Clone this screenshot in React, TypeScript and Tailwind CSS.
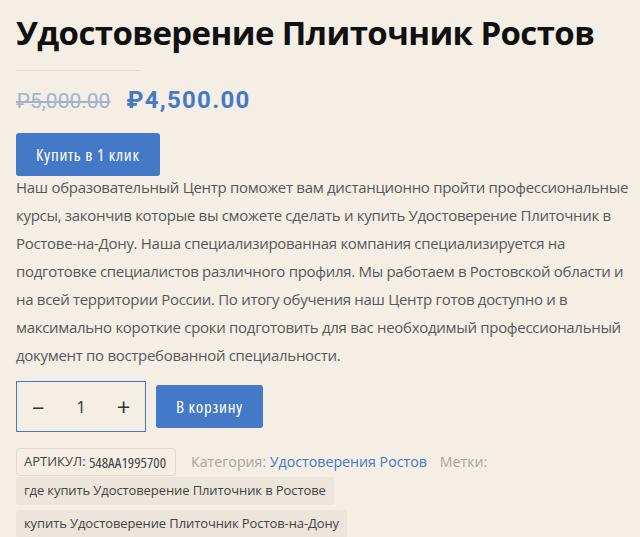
import React, { useState } from "react";

const App = () => {
  const [qty, setQty] = useState(1);

  return (
    <div className="min-h-screen bg-[#f4eee5] pl-4 pt-[11px] font-['Open_Sans',sans-serif] text-[#555]">
      <h1 className="whitespace-nowrap text-[33px] font-bold leading-[44px] tracking-[-0.6px] text-[#111]">
        Удостоверение Плиточник Ростов
      </h1>

      <div className="mt-[15px] h-px w-[124px] bg-[#e2dad0]" />

      <div className="mt-[13px] flex h-[32px] items-baseline gap-[16px] font-['Roboto',sans-serif]">
        <del className="text-[21px] leading-[32px] text-[#a2b4cc]">₽5,000.00</del>
        <span className="text-[24px] font-bold leading-[32px] tracking-[1.3px] text-[#4379c6]">₽4,500.00</span>
      </div>

      <button className="mt-[17px] h-[43px] rounded-[3px] bg-[#4379c6] px-5 text-[17px] tracking-[0.7px] text-white [font-stretch:condensed]">
        Купить в 1 клик
      </button>

      <p className="mt-[-3px] pr-1 text-[15px] leading-[28px] tracking-[-0.3px] text-[#585858]">
        Наш образовательный Центр поможет вам дистанционно пройти профессиональные курсы, закончив которые вы сможете
        сделать и купить Удостоверение Плиточник в Ростове-на-Дону. Наша специализированная компания специализируется на
        подготовке специалистов различного профиля. Мы работаем в Ростовской области и на всей территории России. По итогу
        обучения наш Центр готов доступно и в максимально короткие сроки подготовить для вас необходимый профессиональный
        документ по востребованной специальности.
      </p>

      <div className="mt-[12px] flex items-center gap-[10px]">
        <div className="grid h-[51px] w-[130px] grid-cols-3 items-center border border-[#4379c6] text-center text-[#333]">
          <button onClick={() => setQty(Math.max(1, qty - 1))} className="text-[22px] leading-none">
            −
          </button>
          <span className="text-[17px]">{qty}</span>
          <button onClick={() => setQty(qty + 1)} className="text-[24px] leading-none">
            +
          </button>
        </div>
        <button className="h-[43px] rounded-[3px] bg-[#4379c6] px-5 text-[17px] tracking-[0.7px] text-white [font-stretch:condensed]">
          В корзину
        </button>
      </div>

      <div className="mt-[16px] flex items-center text-[14.2px]">
        <span className="mr-[15px] flex h-[28px] items-center rounded-[4px] border border-[#e2dad0] pl-[7px] pr-[9px] text-[13px] text-[#444]">
          АРТИКУЛ:&nbsp;<span className="text-[15px] [font-stretch:condensed]">548AA1995700</span>
        </span>
        <span className="mr-[13px] text-[#aaa49c]">
          Категория: <a className="text-[#4379c6]">Удостоверения Ростов</a>
        </span>
        <span className="text-[#aaa49c]">Метки:</span>
      </div>
      <div className="mt-px flex flex-col items-start gap-[5px] text-[13px] tracking-[-0.1px] text-[#444]">
        <span className="flex h-[28px] items-center rounded-[3px] bg-[#ece5db] px-[8px]">
          где купить Удостоверение Плиточник в Ростове
        </span>
        <span className="flex h-[28px] items-center rounded-[3px] bg-[#ece5db] px-[8px]">
          купить Удостоверение Плиточник Ростов-на-Дону
        </span>
      </div>
    </div>
  );
};

export default App;
